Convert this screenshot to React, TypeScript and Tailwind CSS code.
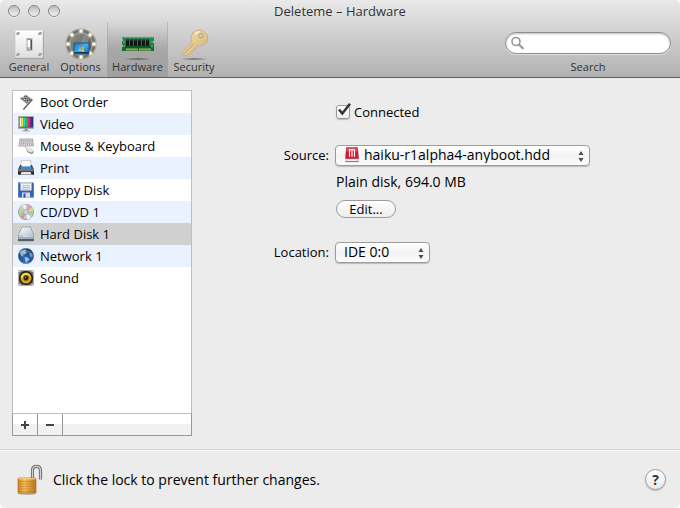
import { useState, type ReactNode } from "react";

function SwitchPlateIcon() {
  return (
    <svg width="32" height="32" viewBox="0 0 32 32" aria-hidden="true">
      <defs>
        <linearGradient id="plate" x1="0" y1="0" x2="0" y2="1">
          <stop offset="0" stopColor="#fff" />
          <stop offset="1" stopColor="#dedede" />
        </linearGradient>
      </defs>
      <rect x="2" y="3" width="29" height="28" rx="1" fill="#777" opacity=".5" />
      <rect x="2" y="2" width="28" height="28" rx="1" fill="url(#plate)" stroke="#c4c4c4" strokeWidth=".6" />
      {[5, 27].map((x) =>
        [5.5, 26.5].map((y) => (
          <g key={`${x}-${y}`}>
            <circle cx={x} cy={y} r="1.7" fill="#b9bec6" />
            <path d={`M${x - 1.2} ${y + 1.2}l2.4-2.4`} stroke="#5f646c" strokeWidth=".9" />
          </g>
        )),
      )}
      <rect x="14" y="10.5" width="5" height="12" fill="#888" stroke="#b4b4b4" />
      <path d="M14.500 12h3v7h-3z" fill="#fff" />
      <path d="M14.500 19h3l1 2.500h-3z" fill="#c9c9c9" />
      <path d="M18.200 12v9.500" stroke="#333" strokeWidth="1" />
    </svg>
  );
}

function OptionsIcon() {
  const bulbs = [
    [16, 3], [25.2, 6.8], [29, 16], [25.2, 25.2], [16, 29], [6.8, 25.2], [3, 16], [6.8, 6.8],
  ];
  return (
    <svg width="32" height="32" viewBox="0 0 32 32" aria-hidden="true">
      <defs>
        <linearGradient id="dial" x1="0" y1="0" x2="1" y2="1">
          <stop offset="0" stopColor="#8f9292" />
          <stop offset=".5" stopColor="#717474" />
          <stop offset="1" stopColor="#505252" />
        </linearGradient>
        <linearGradient id="desk" x1="0" y1="0" x2="1" y2="1">
          <stop offset="0" stopColor="#1d6fc4" />
          <stop offset=".5" stopColor="#3fb0e4" />
          <stop offset="1" stopColor="#1262b0" />
        </linearGradient>
      </defs>
      <circle cx="16" cy="16" r="15.600" fill="#a3a195" />
      <circle cx="16" cy="16" r="14.300" fill="#757368" />
      <circle cx="16" cy="16" r="11.400" fill="url(#dial)" stroke="#aeada3" strokeWidth="1" />
      <path d="M20 5L10 27h7l8-18z" fill="#fff" opacity=".15" />
      {bulbs.map(([x, y]) => (
        <g key={`${x}-${y}`}>
          <circle cx={x} cy={y} r="2.600" fill="#f4e9c4" opacity=".5" />
          <circle cx={x} cy={y} r="1.500" fill="#fffef4" />
        </g>
      ))}
      <rect x="9" y="15" width="15" height="11" fill="url(#desk)" stroke="#15456f" strokeWidth=".7" />
      <rect x="9.500" y="24" width="14" height="1.500" fill="#0e3864" />
      <path d="M14 18.600q1-.8 2.200 0v2.200q-1.200-.8-2.200 0z" fill="#f3742c" />
      <path d="M16.600 18.800q1.200.7 2.300 0v2.200q-1.100.7-2.300 0z" fill="#a4d346" />
      <path d="M14 21.200q1-.8 2.200 0v2.200q-1.200-.8-2.200 0z" fill="#79d0f6" />
      <path d="M16.600 21.400q1.200.7 2.300 0v2.200q-1.100.7-2.300 0z" fill="#ffd33b" />
    </svg>
  );
}

function MemoryIcon() {
  return (
    <svg width="34" height="32" viewBox="0 0 34 32" aria-hidden="true">
      <defs>
        <radialGradient id="shade">
          <stop offset="0" stopColor="#333" stopOpacity=".8" />
          <stop offset="1" stopColor="#333" stopOpacity="0" />
        </radialGradient>
        <linearGradient id="board" x1="0" y1="0" x2="0" y2="1">
          <stop offset="0" stopColor="#239052" />
          <stop offset="1" stopColor="#0b6838" />
        </linearGradient>
      </defs>
      <ellipse cx="17" cy="31" rx="15" ry="1.100" fill="url(#shade)" />
      <path d="M1 9h32v4h-1v2h1v8H1v-4h1v-2H1v-4h1v-2H1z" fill="url(#board)" />
      <path d="M1 9.400h32" stroke="#53b778" strokeWidth=".8" />
      {[5, 9, 13, 17, 21, 25].map((x) => (
        <g key={x}>
          <rect x={x} y="11.500" width="3" height="6.500" fill="#101713" />
          <path d={`M${x + 0.5} 12.300h2`} stroke="#4d5650" strokeWidth=".6" />
        </g>
      ))}
      <path d="M4 19h26" stroke="#063c1d" strokeWidth="1" />
      <path d="M5 21.500h12M18 21.500h12" stroke="#9c9f4c" strokeWidth="1.800" />
      <path d="M2 14h2M2 18h2M30 14h2M30 18h2" stroke="#9ccda9" strokeWidth=".8" />
    </svg>
  );
}

function KeyIcon() {
  return (
    <svg width="34" height="32" viewBox="0 0 34 32" aria-hidden="true">
      <defs>
        <linearGradient id="brass" x1="0" y1="0" x2="1" y2="1">
          <stop offset="0" stopColor="#f0dcae" />
          <stop offset=".55" stopColor="#e3c88f" />
          <stop offset="1" stopColor="#c8a970" />
        </linearGradient>
      </defs>
      <ellipse cx="17" cy="31" rx="15" ry="1.100" fill="url(#shade)" />
      <path
        d="M15.800 5C18 2 23 1 27 3.500c4 3 4.500 8 2.500 11-2 3-5.500 4-9 2.500l-1.500 1.500-.2 2-2 .5-.5 2.200-2 .3-.7 2.500-2.200.2-2 1.600-3.200-.4-.7-3L15 14c-1.500-3-1.200-6 .8-9z"
        fill="url(#brass)"
        stroke="#c4a878"
        strokeWidth=".8"
      />
      <path d="M17 15.500L7.500 25.500" stroke="#b99b66" strokeWidth="1" />
      <circle cx="24" cy="7.800" r="2.200" fill="#d4cdbd" stroke="#b39a6c" strokeWidth=".9" />
      <path d="M18 6.500c1-2 3-2.700 5-2.500" stroke="#fff5d8" fill="none" strokeWidth="1.200" />
    </svg>
  );
}

function FlagIcon() {
  return (
    <svg width="16" height="16" viewBox="0 0 16 16" aria-hidden="true">
      <defs>
        <pattern id="checks" width="3" height="3" patternUnits="userSpaceOnUse" patternTransform="rotate(38)">
          <rect width="3" height="3" fill="#d9d9d9" />
          <path d="M0 0h1.500v1.500H0zM1.500 1.500H3V3H1.500z" fill="#2f2f2f" />
        </pattern>
      </defs>
      <path d="M2 4.500Q5.500 3.800 7.600.700L14.200 5.700Q10.800 6.500 8.800 9.800Q5.500 6.500 2 4.500z" fill="url(#checks)" stroke="#777" strokeWidth=".4" />
      <path d="M14 5.800L5.800 15" stroke="#4d4d4d" strokeWidth="1.300" strokeLinecap="round" />
      <path d="M13.600 5.800L6 14.300" stroke="#aaa" strokeWidth=".4" />
    </svg>
  );
}

function MonitorIcon() {
  const bars = ["#f5f5e8", "#f4ef22", "#20d9dc", "#27cf39", "#f42ae1", "#ee2932", "#222fe6"];
  return (
    <svg width="16" height="16" viewBox="0 0 16 16" aria-hidden="true">
      <rect x="0" y="0" width="16" height="13" rx="1" fill="#a9a9ad" />
      <rect x="1" y="1" width="14" height="10.500" fill="#333" />
      {bars.map((color, i) => (
        <rect key={color} x={1.5 + i * 1.86} y="1.500" width="1.860" height="9.300" fill={color} />
      ))}
      <path d="M6.500 13h3v1.500h-3z" fill="#87878b" />
      <path d="M4.500 14.300h7v1.200h-7z" fill="#a6a6a9" />
    </svg>
  );
}

function KeyboardMouseIcon() {
  return (
    <svg width="16" height="16" viewBox="0 0 16 16" aria-hidden="true">
      <path d="M1.500 .500h13.500l1 8H.300z" fill="#a9a9a9" />
      <path d="M2 2h12.500M2 4.100h13M1.500 6.200h13" stroke="#f0f0f0" strokeWidth="1.200" strokeDasharray="1.200 .9" />
      <path d="M.5 8h15" stroke="#ddd" strokeWidth=".8" />
      <path d="M8 8.500c-1.500 1 .2 2 1.500 2.200" stroke="#999" strokeWidth=".8" fill="none" />
      <ellipse cx="12" cy="12.900" rx="3.800" ry="2.500" transform="rotate(28 12 12.900)" fill="#8f8f8f" />
      <ellipse cx="11.700" cy="11.900" rx="3.500" ry="2.100" transform="rotate(28 11.700 11.900)" fill="#e2e2e2" />
    </svg>
  );
}

function PrinterIcon() {
  return (
    <svg width="16" height="16" viewBox="0 0 16 16" aria-hidden="true">
      <path d="M3.500 .300h9l.8 6.700h-10.600z" fill="#fafafa" stroke="#aaa" strokeWidth=".6" />
      <path d="M2 5h1.500v2h9V5H14l2 4.500v4.300H0V9.500z" fill="#4b4e54" />
      <path d="M3 6.500h10l.6 2.800H2.400z" fill="#4088c4" />
      <path d="M.3 10h15.400" stroke="#afb3b7" strokeWidth=".8" />
      <path d="M0 12h16v2.800H0z" fill="#292a2d" />
      <path d="M3.500 12h9l1 2.500h-11z" fill="#e4e7ea" />
    </svg>
  );
}

function FloppyIcon() {
  return (
    <svg width="16" height="16" viewBox="0 0 16 16" aria-hidden="true">
      <path d="M0 .500h15l1 1V15.500H0z" fill="#3663b1" />
      <path d="M.6 1h14.500l.4.700V15H.600z" fill="none" stroke="#638ace" strokeWidth=".7" />
      <rect x="2.500" y=".5" width="11" height="8" fill="#f4f4ef" />
      <rect x="2.500" y=".5" width="11" height="1.300" fill="#b8cce6" />
      <path d="M4 3.700h8M4 5.500h8M4 7.200h8" stroke="#a9adb2" strokeWidth=".8" />
      <rect x="4" y="10.500" width="8" height="5" fill="#d5dbe4" />
      <rect x="5.500" y="11.500" width="2" height="4" fill="#2855a1" />
    </svg>
  );
}

function DiscIcon() {
  return (
    <svg width="16" height="16" viewBox="0 0 16 16" aria-hidden="true">
      <circle cx="8" cy="8" r="7.600" fill="#c6c8c6" stroke="#929596" strokeWidth=".8" />
      <path d="M8 8L1.200 4.500A7.500 7.500 0 0 1 4 1.600z" fill="#b7d9ac" />
      <path d="M8 8L4 1.600A7.500 7.500 0 0 1 8 .500z" fill="#f2f2ef" />
      <path d="M8 8L11 1A7.500 7.500 0 0 1 14 3.500z" fill="#e08fd0" />
      <path d="M8 8L14 3.500A7.500 7.500 0 0 1 15.500 7z" fill="#e7dc78" />
      <path d="M8 8L15.500 7A7.500 7.500 0 0 1 15.200 10z" fill="#86d6a6" />
      <path d="M8 8L.6 9.500A7.500 7.500 0 0 0 2.300 13z" fill="#a8d658" />
      <path d="M8 8L2.300 13A7.500 7.500 0 0 0 5 15z" fill="#d983c4" />
      <path d="M8 8L9 15.500A7.500 7.500 0 0 0 13 13.500z" fill="#f4f4f4" />
      <circle cx="8" cy="8" r="2.500" fill="#e9e9e9" stroke="#898b8c" strokeWidth=".6" />
      <circle cx="8" cy="8" r="1.100" fill="#fff" stroke="#777" strokeWidth=".4" />
    </svg>
  );
}

function DriveIcon() {
  return (
    <svg width="16" height="16" viewBox="0 0 16 16" aria-hidden="true">
      <defs>
        <linearGradient id="drive" x1="0" y1="0" x2="1" y2="1">
          <stop offset="0" stopColor="#fff" />
          <stop offset="1" stopColor="#b4bfcd" />
        </linearGradient>
      </defs>
      <path d="M4 .800h8.500L16 9v5.500q0 .7-.7.700H.700q-.7 0-.7-.7V9z" fill="#637183" />
      <path d="M4.200 1.200h8.100L15.600 9 8 10.300.4 9z" fill="url(#drive)" />
      <path d="M.3 9.300q7.700 2 15.400 0v3.800H.300z" fill="#a3b0c0" />
      <path d="M.5 9.700q7.500 1.500 15 0" stroke="#fff" fill="none" strokeWidth=".7" />
      <path d="M.3 14h15.400" stroke="#414f60" strokeWidth="1" />
    </svg>
  );
}

function GlobeIcon() {
  return (
    <svg width="16" height="16" viewBox="0 0 16 16" aria-hidden="true">
      <defs>
        <radialGradient id="globe" cx=".5" cy=".8" r=".8">
          <stop offset="0" stopColor="#3775c3" />
          <stop offset="1" stopColor="#16345d" />
        </radialGradient>
      </defs>
      <circle cx="8" cy="8" r="7.800" fill="url(#globe)" stroke="#687d99" strokeWidth=".4" />
      <path d="M1.500 5C3 2 6 1 8.500 1.700L7 3.500l2 1.200-2.500 2L5 6.600l.5 2-2-.4z" fill="#8fb2d6" />
      <path d="M6.500 9l3.200.5 1.800 2-2 1.500-.8 2.400-1.500-3z" fill="#98c0e7" />
      <path d="M12 4l2.700 2.200-.4 3.500-2.400-1.500-.5-2.400z" fill="#6f98c5" />
      <path d="M3 4.500C5 1.500 10 .900 12.800 3.800 10 5.500 6 4.500 3 4.500z" fill="#fff" opacity=".2" />
    </svg>
  );
}

function SpeakerIcon() {
  return (
    <svg width="16" height="16" viewBox="0 0 16 16" aria-hidden="true">
      <rect x=".5" y=".5" width="15" height="15" rx="1" fill="#77776f" stroke="#aaa" />
      <circle cx="8" cy="8" r="7" fill="#1c1b16" />
      <circle cx="8" cy="8" r="5.500" fill="#d8a91c" />
      <path d="M3 8a5 5 0 0 1 9-3L8 8z" fill="#f2d352" />
      <circle cx="8" cy="8" r="2.900" fill="#7c5e15" />
      <circle cx="8" cy="7.800" r="2.200" fill="#211d12" />
      <circle cx="7.500" cy="7.300" r=".8" fill="#a0a0a0" />
      <path d="M1 1.500h1.500M13.500 1.500H15M1 14.500h1.500M13.500 14.500H15" stroke="#eee" />
    </svg>
  );
}

function RedDriveIcon() {
  return (
    <svg width="14" height="16" viewBox="0 0 14 16" aria-hidden="true">
      <path d="M1 .500h12L14 11.500v3q0 .5-.5.500H.500q-.5 0-.5-.500v-3z" fill="#bcbcbc" />
      <path d="M1.200.500h11.600l.9 11.200H.300z" fill="#cf1832" />
      <path d="M1.200.500h11.600l.4 4H.800z" fill="#e04555" />
      <path d="M4.500 9.800V2.500M7 9.800V2.500M9.500 9.800V2.500" stroke="#fff" strokeWidth="1.200" fill="none" />
      <path d="M4 2.500h5" stroke="#fff" strokeWidth="1" />
      <path d="M.2 12.300h13.600v1.500H.200z" fill="#f4f4f4" />
      <path d="M.3 14.600h13.400" stroke="#777" strokeWidth=".9" />
    </svg>
  );
}

function PadlockIcon() {
  return (
    <svg width="26" height="32" viewBox="0 0 26 32" aria-hidden="true">
      <defs>
        <linearGradient id="gold" x1="0" y1="0" x2="1" y2="0">
          <stop offset="0" stopColor="#cf8426" />
          <stop offset=".35" stopColor="#f5bf5c" />
          <stop offset="1" stopColor="#c0761f" />
        </linearGradient>
      </defs>
      <ellipse cx="10" cy="29.500" rx="9.500" ry="1.500" fill="#777" opacity=".5" />
      <path d="M15.500 15V6.500q0-4.200 4-4.200t4 4.200v9" fill="none" stroke="#707070" strokeWidth="3.200" />
      <path d="M15.500 15V6.500q0-4.200 4-4.200t4 4.200v9" fill="none" stroke="#d0d0d0" strokeWidth="1.200" />
      <rect x="1" y="14" width="18" height="15" rx="1" fill="url(#gold)" stroke="#b06e20" strokeWidth=".7" />
      <path d="M1.500 17.500h17M1.500 20h17M1.500 22.500h17M1.500 25h17M1.500 27.500h17" stroke="#a86618" strokeWidth=".8" opacity=".5" />
      <path d="M1.500 14.800h17" stroke="#ffe09a" strokeWidth="1" />
    </svg>
  );
}

function PopupArrows() {
  return (
    <svg className="pointer-events-none absolute top-1.5 right-1.5" width="6" height="11" viewBox="0 0 6 11" aria-hidden="true">
      <path d="M3 0l2.500 4h-5zM3 11L.500 7h5z" fill="#4b4b4b" />
    </svg>
  );
}

function ToolbarButton({ label, icon, width, active }: { label: string; icon: ReactNode; width: string; active?: boolean }) {
  return (
    <button
      type="button"
      aria-pressed={!!active}
      className={`flex h-full flex-col items-center pt-1.5 text-[11px] leading-[14px] text-[#333] ${width} ${
        active ? "border-x border-[#a5a5a5]/60 bg-linear-to-b from-transparent via-black/15 to-black/10" : ""
      }`}
    >
      {icon}
      <span>{label}</span>
    </button>
  );
}

const devices = [
  { name: "Boot Order", icon: <FlagIcon /> },
  { name: "Video", icon: <MonitorIcon /> },
  { name: "Mouse & Keyboard", icon: <KeyboardMouseIcon /> },
  { name: "Print", icon: <PrinterIcon /> },
  { name: "Floppy Disk", icon: <FloppyIcon /> },
  { name: "CD/DVD 1", icon: <DiscIcon /> },
  { name: "Hard Disk 1", icon: <DriveIcon /> },
  { name: "Network 1", icon: <GlobeIcon /> },
  { name: "Sound", icon: <SpeakerIcon /> },
];

const selectStyle =
  "block h-[21px] w-full appearance-none rounded border border-[#9c9c9c] bg-linear-to-b from-white via-[#f3f3f3] to-[#fbfbfb] pb-px text-sm leading-4 text-black shadow-[0_1px_1px_#bbb]";

export default function App() {
  const [selected, setSelected] = useState("Hard Disk 1");
  const [connected, setConnected] = useState(true);

  return (
    <div className="flex min-h-screen flex-col overflow-hidden rounded-[5px] bg-[#ececec] font-['Open_Sans','Noto_Sans',sans-serif] text-[13px] leading-4 text-black">
      <header className="h-[78px] border-b border-[#5e5e5e] bg-linear-to-b from-[#e9e9e9] to-[#b1b1b1]">
        <div className="grid h-[22px] grid-cols-[1fr_auto_1fr] items-center">
          <div className="flex gap-2 pl-2">
            {["Close", "Minimize", "Zoom"].map((name) => (
              <button
                key={name}
                type="button"
                aria-label={name}
                className="size-3 rounded-full border border-[#858585] bg-linear-to-b from-[#bcbcbc] to-[#f2f2f2] shadow-[0_1px_0_#eee]"
              />
            ))}
          </div>
          <h1 className="text-[#333]">Deleteme – Hardware</h1>
        </div>
        <div className="flex h-[55px] items-stretch justify-between pr-[9px]">
          <nav className="flex pl-1" aria-label="Settings sections">
            <ToolbarButton label="General" width="w-[50px]" icon={<SwitchPlateIcon />} />
            <ToolbarButton label="Options" width="w-[53px]" icon={<OptionsIcon />} />
            <ToolbarButton label="Hardware" width="w-[61px]" icon={<MemoryIcon />} active />
            <ToolbarButton label="Security" width="w-[52px]" icon={<KeyIcon />} />
          </nav>
          <label className="flex flex-col items-center pt-2.5 text-[11px] leading-[14px] text-[#333]">
            <span className="relative mb-1.5">
              <input
                type="search"
                className="block h-[22px] w-[166px] rounded-full border border-[#8d8d8d] bg-white pr-2 pl-6 shadow-[inset_0_1px_2px_#bbb,0_1px_0_#ddd] outline-none"
              />
              <svg className="absolute top-1 left-1.5" width="14" height="14" viewBox="0 0 14 14" aria-hidden="true">
                <circle cx="5" cy="5.500" r="4" fill="none" stroke="#979797" strokeWidth="1.600" />
                <path d="M8.200 8.700l3.600 3.600" stroke="#979797" strokeWidth="2.200" strokeLinecap="round" />
              </svg>
            </span>
            Search
          </label>
        </div>
      </header>

      <main className="flex flex-1 px-3 pt-3 pb-[13px]">
        <section className="flex w-[180px] shrink-0 flex-col border border-[#bebebe] bg-white" aria-label="Devices">
          <ul className="flex-1">
            {devices.map((device) => (
              <li key={device.name} className="even:bg-[#ebf2ff]">
                <button
                  type="button"
                  aria-pressed={selected === device.name}
                  onClick={() => setSelected(device.name)}
                  className={`flex h-[22px] w-full items-center gap-1.5 pl-[5px] text-left ${
                    selected === device.name ? "bg-[#d0d0d0]" : ""
                  }`}
                >
                  {device.icon}
                  {device.name}
                </button>
              </li>
            ))}
          </ul>
          <div className="-mx-px -mb-px flex h-[23px] border border-[#999] border-t-[#bebebe] bg-linear-to-b from-white from-50% to-[#f1f1f1] to-50%">
            <button type="button" aria-label="Add device" className="flex w-[25px] items-center justify-center border-r border-[#999]">
              <svg width="8" height="8" viewBox="0 0 8 8" aria-hidden="true">
                <path d="M0 4h8M4 0v8" stroke="#444" strokeWidth="2" />
              </svg>
            </button>
            <button type="button" aria-label="Remove device" className="flex w-[25px] items-center justify-center border-r border-[#999]">
              <svg width="8" height="8" viewBox="0 0 8 8" aria-hidden="true">
                <path d="M0 4h8" stroke="#444" strokeWidth="2" />
              </svg>
            </button>
          </div>
        </section>

        <form className="grid flex-1 grid-cols-[137px_minmax(0,255px)] content-start gap-x-1.5 pt-3.5">
          <label className="col-start-2 flex h-4 items-center gap-1 pl-px">
            <span className="relative size-3.5">
              <input
                type="checkbox"
                checked={connected}
                onChange={(event) => setConnected(event.target.checked)}
                className="block size-3.5 appearance-none rounded-[3px] border border-[#999] bg-linear-to-b from-white to-[#eee] shadow-[0_1px_1px_#bbb]"
              />
              {connected && (
                <svg className="pointer-events-none absolute -top-0.5 left-0.5" width="14" height="14" viewBox="0 0 14 14" aria-hidden="true">
                  <path d="M1 6.500l3.300 4L12 .800" fill="none" stroke="#333" strokeWidth="2.500" />
                </svg>
              )}
            </span>
            Connected
          </label>

          <label htmlFor="source" className="mt-[25px] flex h-5 items-center justify-end">
            Source:
          </label>
          <div className="relative mt-[25px]">
            <select id="source" className={`${selectStyle} pr-5 pl-7`}>
              <option>haiku-r1alpha4-anyboot.hdd</option>
            </select>
            <span className="pointer-events-none absolute top-0.5 left-2.5">
              <RedDriveIcon />
            </span>
            <PopupArrows />
          </div>

          <p className="col-start-2 mt-2 pl-px text-sm leading-4">Plain disk, 694.0 MB</p>
          <button
            type="button"
            className="col-start-2 mt-2.5 ml-px flex h-[18px] w-[60px] items-center justify-center rounded-full border border-[#9b9b9b] bg-linear-to-b from-white to-[#ededed]"
          >
            Edit...
          </button>

          <label htmlFor="location" className="mt-6 flex h-5 items-center justify-end">
            Location:
          </label>
          <div className="relative mt-6 w-[95px]">
            <select id="location" className={`${selectStyle} pr-5 pl-2`}>
              <option>IDE 0:0</option>
            </select>
            <PopupArrows />
          </div>
        </form>
      </main>

      <footer className="flex h-[59px] items-center justify-between border-t border-[#d4d4d4] pt-px pr-3.5 pl-[17px] shadow-[inset_0_1px_0_#f8f8f8]">
        <div className="flex items-center gap-2.5">
          <button type="button" aria-label="Lock settings">
            <PadlockIcon />
          </button>
          <p className="text-sm leading-4">Click the lock to prevent further changes.</p>
        </div>
        <button
          type="button"
          aria-label="Help"
          className="flex size-[21px] items-center justify-center rounded-full border border-[#9b9b9b] bg-linear-to-b from-white to-[#e9e9e9] text-sm font-bold text-[#333] shadow-[0_1px_1px_#bbb]"
        >
          ?
        </button>
      </footer>
    </div>
  );
}
